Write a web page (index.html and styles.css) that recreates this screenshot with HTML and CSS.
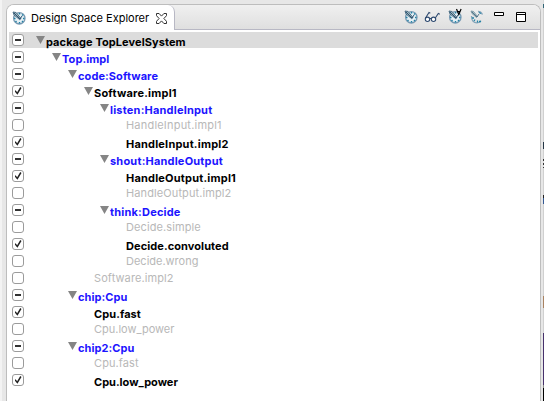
FILE: index.html
```
<!DOCTYPE html>
<html lang="en">
<head>
<meta charset="utf-8">
<title>Design Space Explorer</title>
<link rel="stylesheet" href="styles.css">
</head>
<body>
<svg class="defs" width="0" height="0" aria-hidden="true">
  <symbol id="compass" viewBox="0 0 14 14">
    <circle cx="7.300" cy="7.300" r="5.700" fill="#e6f0f5" stroke="#7899b2" stroke-width="1.300"/>
    <path d="M7.500 2v1.500M7.500 11v1.500M2 7.500h1.500M11 7.500h1.500M3.500 11l1-1M11 3.500l-1 1M11 11l-1-1" stroke="#2382a5" stroke-width="1.400"/>
    <path d="M1 1l3 .5L9 7.500l-1.200 1.200L2 4z" fill="#a0b9c0" stroke="#40637c" stroke-width=".9"/>
    <path d="M2 2l6 6 2-3" fill="none" stroke="#305270" stroke-width="1"/>
  </symbol>
  <symbol id="partial" viewBox="0 0 14 14">
    <path d="M8 1.500Q11 1.500 12.500 4.500M1.500 6Q1.500 12.800 7 12.800q3 0 4-2" fill="none" stroke="#86a5ba" stroke-width="1.300"/>
    <path d="M9 2.500l2 1M2 8h2M4 11l1-1.500M7.500 10.500v2M9 11.500h2" stroke="#2382a5" stroke-width="1.300"/>
    <path d="M1 1l2.500.5L7.500 6.500l-1 1L2 3.500z" fill="#b5c8cb" stroke="#6a8999" stroke-width=".8"/>
    <path d="M2 2l5 5 2-3" fill="none" stroke="#4a6d83" stroke-width=".9"/>
  </symbol>
</svg>
<div class="window">
  <section class="panel">
    <header class="bar">
      <div class="tab">
        <svg class="logo" width="14" height="14"><use href="#compass"/></svg>
        <span class="title">Design Space Explorer</span>
        <svg class="close" width="11" height="11" viewBox="0 0 11 11"><path d="M.5.5h2.600l2.400 2.600L7.900.5h2.600v2.200L7.900 5.500l2.600 2.800v2.200H7.900L5.500 7.900l-2.400 2.600H.5V8.300l2.600-2.800L.5 2.700z" fill="#fff" stroke="#333" stroke-width="1"/></svg>
      </div>
      <div class="tools">
        <svg class="t1" width="14" height="14"><use href="#compass"/></svg>
        <svg class="t2" width="17" height="12" viewBox="0 0 17 12"><g fill="#fff" stroke="#2e4a70" stroke-width="1.100"><circle cx="3.500" cy="8.300" r="2.200"/><circle cx="9.500" cy="8.300" r="2.200"/><path d="M1.500 7L5 1.500l1.300.8M5.700 7.500h1.600M11.300 7l3-4.500 1.500.8" fill="none"/></g></svg>
        <svg class="t3" width="16" height="16" viewBox="0 0 16 16"><use href="#compass" y="2" width="14" height="14"/><path d="M8.500 1l2.300 5.500L13.100 1M9.200 3.500h3.200" fill="none" stroke="#000" stroke-width="1.200"/></svg>
        <svg class="t4" width="14" height="14"><use href="#partial"/></svg>
        <svg class="t5" width="10" height="4" viewBox="0 0 10 4"><path d="M.5.5h9v3h-9z" fill="#fff" stroke="#000"/></svg>
        <svg class="t6" width="10" height="10" viewBox="0 0 10 10"><path d="M.5.5h9v9h-9zM0 2.500h10" fill="#fff" stroke="#000"/></svg>
      </div>
    </header>
    <main class="tree">
      <div class="row selected"><i class="box minus"></i><span class="node d0 open">package TopLevelSystem</span></div>
      <div class="row"><i class="box minus"></i><span class="node d1 open blue">Top.impl</span></div>
      <div class="row"><i class="box minus"></i><span class="node d2 open blue">code:Software</span></div>
      <div class="row"><i class="box check"></i><span class="node d3 open wide">Software.impl1</span></div>
      <div class="row"><i class="box minus"></i><span class="node d4 open blue wide">listen:HandleInput</span></div>
      <div class="row"><i class="box"></i><span class="node d5 off wide">HandleInput.impl1</span></div>
      <div class="row"><i class="box check"></i><span class="node d5 wide">HandleInput.impl2</span></div>
      <div class="row"><i class="box minus"></i><span class="node d4 open blue wide">shout:HandleOutput</span></div>
      <div class="row"><i class="box check"></i><span class="node d5 wide">HandleOutput.impl1</span></div>
      <div class="row"><i class="box"></i><span class="node d5 off">HandleOutput.impl2</span></div>
      <div class="row"><i class="box minus"></i><span class="node d4 open blue wide">think:Decide</span></div>
      <div class="row"><i class="box"></i><span class="node d5 off">Decide.simple</span></div>
      <div class="row"><i class="box check"></i><span class="node d5">Decide.convoluted</span></div>
      <div class="row"><i class="box"></i><span class="node d5 off tight">Decide.wrong</span></div>
      <div class="row"><i class="box"></i><span class="node d3 off">Software.impl2</span></div>
      <div class="row"><i class="box minus"></i><span class="node d2 open blue">chip:Cpu</span></div>
      <div class="row"><i class="box check"></i><span class="node d3">Cpu.fast</span></div>
      <div class="row"><i class="box"></i><span class="node d3 off tight">Cpu.low_power</span></div>
      <div class="row"><i class="box minus"></i><span class="node d2 open blue">chip2:Cpu</span></div>
      <div class="row"><i class="box"></i><span class="node d3 off">Cpu.fast</span></div>
      <div class="row"><i class="box check"></i><span class="node d3 tight">Cpu.low_power</span></div>
    </main>
  </section>
  <div class="gutter"></div>
  <div class="edge"></div>
</div>
</body>
</html>
```
FILE: styles.css
```
* { box-sizing: border-box; }
body { margin: 0; background: #e7e7e7; font-family: Inter, sans-serif; }
.defs { position: absolute; }
.window { display: flex; width: 544px; height: 401px; overflow: hidden; border-left: 2px solid #f3f3f3; }
.panel { width: 535px; height: 397px; margin: 4px 0 0 4px; border: 1px solid #bdbdbd; border-bottom: 0; border-radius: 8px 8px 0 0; background: #fff; overflow: hidden; }
.bar { display: flex; height: 25px; background: linear-gradient(#f0f0f0, #dfdfdf); border-bottom: 1px solid #b8b8c4; }
.tab { display: flex; width: 168px; height: 25px; flex: none; background: #fff; border-right: 1px solid #b8b8c4; border-radius: 0 7px 0 0; }
.logo { margin: 6px 0 0 5px; flex: none; }
.title { width: 125px; flex: none; margin-left: 5px; font-size: 11px; line-height: 27px; letter-spacing: 0; white-space: nowrap; color: #000; }
.close { margin: 8px 0 0; flex: none; }
.tools { display: flex; flex: 1; padding-top: 5px; }
.tools svg { flex: none; }
.t1 { margin-left: 229px; }
.t2 { margin: 1px 0 0 6px; }
.t3 { margin: -2px 0 0 7px; }
.t4 { margin-left: 6px; }
.t5 { margin: 2px 0 0 10px; }
.t6 { margin: 2px 0 0 12px; }
.tree { padding: 2px 2px 0; }
.row { display: flex; height: 17px; }
.selected { background: #dcdcdc; height: 16px; margin-bottom: 1px; }
.box { position: relative; width: 12px; height: 12px; margin: 2px 0 0 3px; flex: none; border: 1px solid #9b9b9b; border-radius: 3px; background: #fff; }
.minus::after { content: ""; position: absolute; left: 2px; top: 4px; width: 6px; height: 2px; background: #333; }
.check::after { content: ""; position: absolute; left: 1.500px; top: 1px; width: 7px; height: 8px; background: #222; clip-path: polygon(0 52%, 16% 40%, 38% 66%, 82% 0, 100% 11%, 42% 96%); }
.node { position: relative; font-size: 11px; line-height: 17px; height: 17px; padding-top: 2px; font-weight: 700; letter-spacing: .08px; white-space: nowrap; color: #000; }
.blue { color: #1c14ff; }
.off { padding-top: 0; font-weight: 400; color: #b8b8b8; letter-spacing: .1px; }
.wide { letter-spacing: .2px; }
.tight { letter-spacing: 0; }
.open::before { content: ""; position: absolute; left: -10px; top: 4px; width: 9px; height: 8px; background: #858585; clip-path: polygon(0 0, 100% 0, 50% 100%); }
.d0 { margin-left: 22px; }
.d1 { margin-left: 38px; }
.d2 { margin-left: 54px; }
.d3 { margin-left: 70px; }
.d4 { margin-left: 86px; }
.d5 { margin-left: 102px; }
.gutter { width: 2px; flex: none; }
.edge { width: 1px; flex: none; background: linear-gradient(#d9d9d9 0 4px, #367 4px 8px, #d0d0d0 8px 142px, #263746 142px 149px, #d0d0d0 149px 159px, #333 159px 161px, #ddd 161px 163px, #333 163px 165px, #ddd 165px 167px, #333 167px 168px, #d0d0d0 168px 195px, #222 195px 198px, #345893 198px 204px, #d0d0d0 204px 296px, #a98261 296px 308px, #d0d0d0 308px 333px, #47316c 333px 385px, #888 385px 388px, #000 388px); }
```
